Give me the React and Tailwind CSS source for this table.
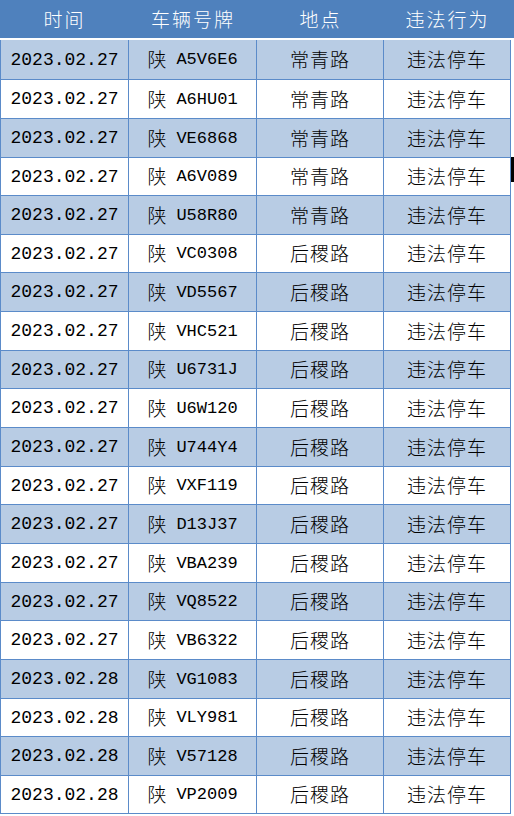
import React from "react";

const rows = [
  ["2023.02.27", "A5V6E6", "常青路", "h-[40px]"],
  ["2023.02.27", "A6HU01", "常青路", "h-[39px]"],
  ["2023.02.27", "VE6868", "常青路", "h-[39px]"],
  ["2023.02.27", "A6V089", "常青路", "h-[38px]"],
  ["2023.02.27", "U58R80", "常青路", "h-[39px]"],
  ["2023.02.27", "VC0308", "后稷路", "h-[38px]"],
  ["2023.02.27", "VD5567", "后稷路", "h-[39px]"],
  ["2023.02.27", "VHC521", "后稷路", "h-[39px]"],
  ["2023.02.27", "U6731J", "后稷路", "h-[38px]"],
  ["2023.02.27", "U6W120", "后稷路", "h-[39px]"],
  ["2023.02.27", "U744Y4", "后稷路", "h-[39px]"],
  ["2023.02.27", "VXF119", "后稷路", "h-[38px]"],
  ["2023.02.27", "D13J37", "后稷路", "h-[39px]"],
  ["2023.02.27", "VBA239", "后稷路", "h-[39px]"],
  ["2023.02.27", "VQ8522", "后稷路", "h-[38px]"],
  ["2023.02.27", "VB6322", "后稷路", "h-[39px]"],
  ["2023.02.28", "VG1083", "后稷路", "h-[39px]"],
  ["2023.02.28", "VLY981", "后稷路", "h-[38px]"],
  ["2023.02.28", "V57128", "后稷路", "h-[39px]"],
  ["2023.02.28", "VP2009", "后稷路", "h-[38px]"],
];

const cjk = { fontFamily: '"Noto Sans CJK SC", sans-serif' };
const mono = { fontFamily: '"Liberation Mono", "Noto Sans CJK SC", monospace' };

export default function App() {
  return (
    <div className="relative w-[514px] h-[816px] bg-white overflow-hidden">
      <div
        className="flex h-[38px] bg-[#4F81BD] text-white text-[19px] leading-none font-light"
        style={cjk}
      >
        <div className="w-[129px] flex items-center justify-center tracking-[2px] pb-[1px]">时间</div>
        <div className="w-[128px] flex items-center justify-center tracking-[2px] pb-[1px]">车辆号牌</div>
        <div className="w-[127px] flex items-center justify-center tracking-[2px] pb-[1px]">地点</div>
        <div className="w-[127px] flex items-center justify-center tracking-[2px] pb-[1px]">违法行为</div>
      </div>
      <div className="mt-[2px] w-[511px] border-l border-[#5B8BC9] text-black">
        {rows.map(([date, plate, place, h], i) => (
          <div
            key={i}
            className={`flex border-b border-[#5B8BC9] ${h} ${
              i % 2 === 0 ? "bg-[#B8CCE4]" : "bg-white"
            }`}
          >
            <div
              className="w-[128px] border-r border-[#5B8BC9] flex items-center justify-center text-[18px] leading-none"
              style={mono}
            >
              {date}
            </div>
            <div className="w-[128px] border-r border-[#5B8BC9] flex items-center justify-center leading-none">
              <span className="text-[19px] font-light pb-[2px]" style={cjk}>陕</span>
              <span className="text-[17px] ml-[10px]" style={mono}>{plate}</span>
            </div>
            <div
              className="w-[127px] border-r border-[#5B8BC9] flex items-center justify-center text-[19px] tracking-[1px] leading-none font-light pb-[2px]"
              style={cjk}
            >
              {place}
            </div>
            <div
              className="w-[127px] border-r border-[#5B8BC9] flex items-center justify-center text-[19px] tracking-[1px] leading-none font-light pb-[2px]"
              style={cjk}
            >
              违法停车
            </div>
          </div>
        ))}
      </div>
      <div className="absolute left-[511px] top-[157px] w-[3px] h-[25px] bg-black" />
    </div>
  );
}
